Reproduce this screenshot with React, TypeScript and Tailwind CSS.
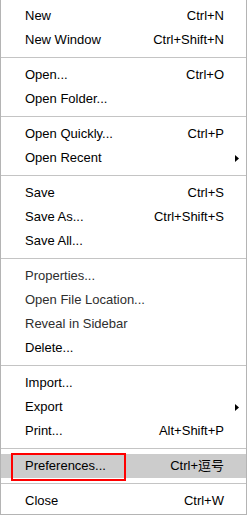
type Item =
  | { type: "sep" }
  | {
      type: "item";
      label: string;
      shortcut?: string;
      submenu?: boolean;
      dim?: boolean;
      active?: boolean;
    };

const items: Item[] = [
  { type: "item", label: "New", shortcut: "Ctrl+N" },
  { type: "item", label: "New Window", shortcut: "Ctrl+Shift+N" },
  { type: "sep" },
  { type: "item", label: "Open...", shortcut: "Ctrl+O" },
  { type: "item", label: "Open Folder..." },
  { type: "sep" },
  { type: "item", label: "Open Quickly...", shortcut: "Ctrl+P" },
  { type: "item", label: "Open Recent", submenu: true },
  { type: "sep" },
  { type: "item", label: "Save", shortcut: "Ctrl+S" },
  { type: "item", label: "Save As...", shortcut: "Ctrl+Shift+S" },
  { type: "item", label: "Save All..." },
  { type: "sep" },
  { type: "item", label: "Properties...", dim: true },
  { type: "item", label: "Open File Location...", dim: true },
  { type: "item", label: "Reveal in Sidebar", dim: true },
  { type: "item", label: "Delete..." },
  { type: "sep" },
  { type: "item", label: "Import..." },
  { type: "item", label: "Export", submenu: true },
  { type: "item", label: "Print...", shortcut: "Alt+Shift+P" },
  { type: "sep" },
  { type: "item", label: "Preferences...", shortcut: "Ctrl+逗号", active: true },
  { type: "sep" },
  { type: "item", label: "Close", shortcut: "Ctrl+W" },
];

const App = () => {
  return (
    <div className="h-[517px] w-[248px] bg-white">
      <div
        className="w-[247px] border-x border-b border-[#b4b4b4] bg-white pb-[1px] pt-1 text-[13px] text-black"
        style={{ fontFamily: '"Liberation Sans", "Noto Sans CJK SC", sans-serif' }}
      >
        {items.map((item, i) =>
          item.type === "sep" ? (
            <div key={i} className="my-[5px] h-px bg-[#c4c4c4]" />
          ) : (
            <div
              key={i}
              className={`relative flex h-6 items-center pl-6 ${
                item.active ? "bg-[#cccccc]" : ""
              }`}
            >
              <span className={`flex-1 ${item.dim ? "text-[#2e2e2e]" : ""}`}>
                {item.label}
              </span>
              {item.shortcut && <span>{item.shortcut}</span>}
              <span className="flex w-[22px] shrink-0 items-center pl-[11px]">
                {item.submenu && (
                  <svg width="4" height="7" viewBox="0 0 4 7">
                    <path d="M0 0 L4 3.5 L0 7 Z" fill="#000" />
                  </svg>
                )}
              </span>
              {/* red highlight box drawn over the hovered row */}
              {item.active && (
                <div className="absolute left-[10px] top-[-1px] h-[28px] w-[115px] border-2 border-[#ff0000]" />
              )}
            </div>
          )
        )}
      </div>
    </div>
  );
};

export default App;
